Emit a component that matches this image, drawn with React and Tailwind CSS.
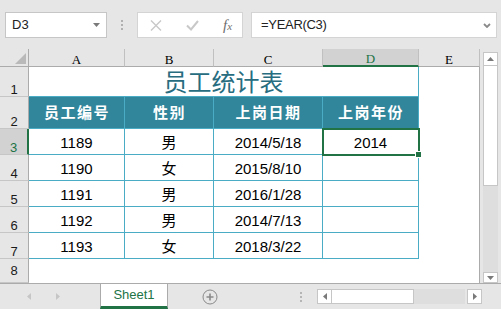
import React from 'react';

const dataRows = [
  { n: 3, id: '1189', sex: '男', date: '2014/5/18', year: '2014' },
  { n: 4, id: '1190', sex: '女', date: '2015/8/10', year: '' },
  { n: 5, id: '1191', sex: '男', date: '2016/1/28', year: '' },
  { n: 6, id: '1192', sex: '男', date: '2014/7/13', year: '' },
  { n: 7, id: '1193', sex: '女', date: '2018/3/22', year: '' },
];

function RowHead({ n, sel, center }) {
  return (
    <div
      className={`w-[29px] shrink-0 border-b border-[#c6c6c6] flex justify-center text-[13px] leading-none ${
        center ? 'items-center' : 'items-end'
      } ${
        sel
          ? 'bg-[#d2d2d2] text-[#217346] border-r-2 border-r-[#217346]'
          : 'bg-[#e6e6e6] text-[#1a1a1a] border-r border-r-[#ababab]'
      }`}
    >
      {n}
    </div>
  );
}

function Cell({ w, children }) {
  return (
    <div
      className={`${w} shrink-0 bg-white border-r border-b border-[#4bacc6] flex items-end justify-center pb-[4px] text-[15px] leading-none text-black`}
    >
      {children}
    </div>
  );
}

function HeadCell({ w, children }) {
  return (
    <div
      className={`${w} shrink-0 bg-[#31869b] border-r border-b border-[#4bacc6] flex items-center justify-center pt-[2px] pl-[1px] text-[15px] font-bold tracking-[1.5px] text-white`}
    >
      {children}
    </div>
  );
}

function ColHead({ w, sel, children }) {
  return (
    <div
      className={`${w} shrink-0 border-r border-r-[#c0c0c0] flex items-end justify-center font-['Liberation_Serif',serif] text-[13px] leading-none ${
        sel
          ? 'bg-[#d2d2d2] text-[#217346] border-b-2 border-b-[#217346]'
          : 'bg-[#e6e6e6] text-black border-b border-b-[#ababab]'
      }`}
    >
      {children}
    </div>
  );
}

function EmptyE() {
  return <div className="w-[61px] shrink-0 bg-white border-r border-[#ababab]" />;
}

function Toolbar() {
  return (
    <div className="h-[49px] shrink-0 flex items-start pt-[12px]">
      <div className="ml-[5px] w-[102px] h-[26px] bg-white border border-[#c6c6c6] flex items-center pl-[6px] pr-[6px]">
        <span className="flex-1 text-[13px] text-[#222]">D3</span>
        <svg width="7" height="4" viewBox="0 0 7 4">
          <path d="M0 0H7L3.5 4Z" fill="#7a7a7a" />
        </svg>
      </div>
      <div className="w-[30px] h-[26px] flex flex-col items-center justify-center gap-[2px]">
        <div className="w-[2px] h-[2px] bg-[#b0b0b0]" />
        <div className="w-[2px] h-[2px] bg-[#b0b0b0]" />
        <div className="w-[2px] h-[2px] bg-[#b0b0b0]" />
      </div>
      <div className="w-[106px] h-[26px] bg-white border border-[#d4d4d4] flex items-center pl-[12px]">
        <svg width="12" height="11" viewBox="0 0 12 11">
          <path d="M1 0.5L11 10.5M11 0.5L1 10.5" stroke="#c8c8c8" strokeWidth="1.4" fill="none" />
        </svg>
        <svg className="ml-[24px]" width="13" height="11" viewBox="0 0 13 11">
          <path d="M1 5.5L5 9.5L12 1" stroke="#c8c8c8" strokeWidth="2" fill="none" />
        </svg>
        <span className="ml-[24px] font-['Liberation_Serif',serif] italic text-[15px] leading-none text-[#6e6e6e]">
          f<span className="text-[11px]">x</span>
        </span>
      </div>
      <div className="ml-[8px] w-[246px] h-[26px] bg-white border border-[#d4d4d4] flex items-center pl-[9px] pr-[5px]">
        <span className="flex-1 text-[13px] tracking-[-0.3px] text-[#222]">=YEAR(C3)</span>
        <svg width="8" height="5" viewBox="0 0 8 5">
          <path d="M1 1L4 4L7 1" stroke="#8a8a8a" strokeWidth="1.8" fill="none" />
        </svg>
      </div>
    </div>
  );
}

function Grid() {
  return (
    <div className="w-[480px] shrink-0 flex flex-col bg-white">
      {/* column headers */}
      <div className="flex h-[18px]">
        <div className="w-[29px] shrink-0 bg-[#e6e6e6] border-r border-b border-[#ababab] flex items-end justify-end pr-[2px] pb-[2px]">
          <svg width="11" height="11" viewBox="0 0 11 11">
            <path d="M11 0V11H0Z" fill="#b9b9b9" />
          </svg>
        </div>
        <ColHead w="w-[96px]">A</ColHead>
        <ColHead w="w-[89px]">B</ColHead>
        <ColHead w="w-[109px]">C</ColHead>
        <ColHead w="w-[96px]" sel>D</ColHead>
        <ColHead w="w-[61px]">E</ColHead>
      </div>

      {/* row 1 title */}
      <div className="flex h-[30px]">
        <RowHead n={1} />
        <div className="w-[390px] shrink-0 bg-white border-r border-b border-[#4bacc6] flex items-center justify-center pt-[3px] text-[24px] leading-none text-[#276d7f]">
          员工统计表
        </div>
        <EmptyE />
      </div>

      {/* row 2 headers */}
      <div className="flex h-[32px]">
        <RowHead n={2} />
        <HeadCell w="w-[96px]">员工编号</HeadCell>
        <HeadCell w="w-[89px]">性别</HeadCell>
        <HeadCell w="w-[109px]">上岗日期</HeadCell>
        <HeadCell w="w-[96px]">上岗年份</HeadCell>
        <EmptyE />
      </div>

      {dataRows.map((r) => (
        <div key={r.n} className="flex h-[26px]">
          <RowHead n={r.n} sel={r.n === 3} />
          <Cell w="w-[96px]">{r.id}</Cell>
          <Cell w="w-[89px]">{r.sex}</Cell>
          <Cell w="w-[109px]">{r.date}</Cell>
          <div className="w-[96px] shrink-0 relative bg-white border-r border-b border-[#4bacc6] flex items-end justify-center pb-[4px] text-[15px] leading-none text-black">
            {r.year}
            {r.n === 3 && (
              <div className="absolute left-[-1px] top-[-1px] w-[98px] h-[28px] border-2 border-[#217346] z-10">
                <div className="absolute left-[91px] top-[21px] w-[7px] h-[7px] bg-[#217346] border border-white" />
              </div>
            )}
          </div>
          <EmptyE />
        </div>
      ))}

      {/* row 8 */}
      <div className="flex h-[24px]">
        <RowHead n={8} center />
        <div className="w-[451px] shrink-0 bg-white border-r border-[#ababab]" />
      </div>
    </div>
  );
}

function VScroll() {
  return (
    <div className="ml-[3px] w-[15px] shrink-0 flex flex-col pt-[3px]">
      <div className="h-[14px] bg-white border border-[#c6c6c6] flex items-center justify-center">
        <svg width="7" height="4" viewBox="0 0 7 4">
          <path d="M0 4H7L3.5 0Z" fill="#7a7a7a" />
        </svg>
      </div>
      <div className="h-[120px] bg-white border-x border-b border-[#c6c6c6]" />
      <div className="flex-1 bg-[#dedede]" />
      <div className="h-[11px] bg-white border border-[#c6c6c6] flex items-center justify-center">
        <svg width="7" height="4" viewBox="0 0 7 4">
          <path d="M0 0H7L3.5 4Z" fill="#7a7a7a" />
        </svg>
      </div>
    </div>
  );
}

function BottomBar() {
  return (
    <div className="h-[26px] shrink-0 border-t border-[#ababab] flex items-center">
      <svg className="ml-[27px]" width="4" height="7" viewBox="0 0 4 7">
        <path d="M4 0V7L0 3.5Z" fill="#c6c6c6" />
      </svg>
      <svg className="ml-[25px]" width="4" height="7" viewBox="0 0 4 7">
        <path d="M0 0V7L4 3.5Z" fill="#c6c6c6" />
      </svg>
      <div className="ml-[40px] w-[68px] self-stretch bg-white border-x border-x-[#ababab] border-b-[3px] border-b-[#217346] flex items-center justify-center text-[13px] text-[#217346]">
        Sheet1
      </div>
      <svg className="ml-[34px]" width="16" height="16" viewBox="0 0 16 16">
        <circle cx="8" cy="8" r="7" stroke="#8a8a8a" strokeWidth="1" fill="none" />
        <path d="M8 4.5V11.5M4.5 8H11.5" stroke="#8a8a8a" strokeWidth="1.6" />
      </svg>
      <div className="ml-[82px] flex flex-col gap-[2px]">
        <div className="w-[2px] h-[2px] bg-[#b5b5b5]" />
        <div className="w-[2px] h-[2px] bg-[#b5b5b5]" />
        <div className="w-[2px] h-[2px] bg-[#b5b5b5]" />
      </div>
      <div className="ml-[15px] flex h-[15px]">
        <div className="w-[15px] bg-white border border-[#c6c6c6] flex items-center justify-center">
          <svg width="4" height="7" viewBox="0 0 4 7">
            <path d="M4 0V7L0 3.5Z" fill="#7a7a7a" />
          </svg>
        </div>
        <div className="w-[82px] bg-white border-y border-r border-[#c6c6c6]" />
        <div className="w-[51px] bg-[#dedede]" />
        <div className="w-[2px]" />
        <div className="w-[15px] bg-white border border-[#c6c6c6] flex items-center justify-center">
          <svg width="4" height="7" viewBox="0 0 4 7">
            <path d="M0 0V7L4 3.5Z" fill="#7a7a7a" />
          </svg>
        </div>
      </div>
    </div>
  );
}

export default function App() {
  return (
    <div className="w-[501px] h-[309px] overflow-hidden bg-[#e6e6e6] flex flex-col font-['Liberation_Sans','Noto_Sans_CJK_SC',sans-serif]">
      <Toolbar />
      <div className="flex h-[234px] shrink-0">
        <Grid />
        <VScroll />
      </div>
      <BottomBar />
    </div>
  );
}
